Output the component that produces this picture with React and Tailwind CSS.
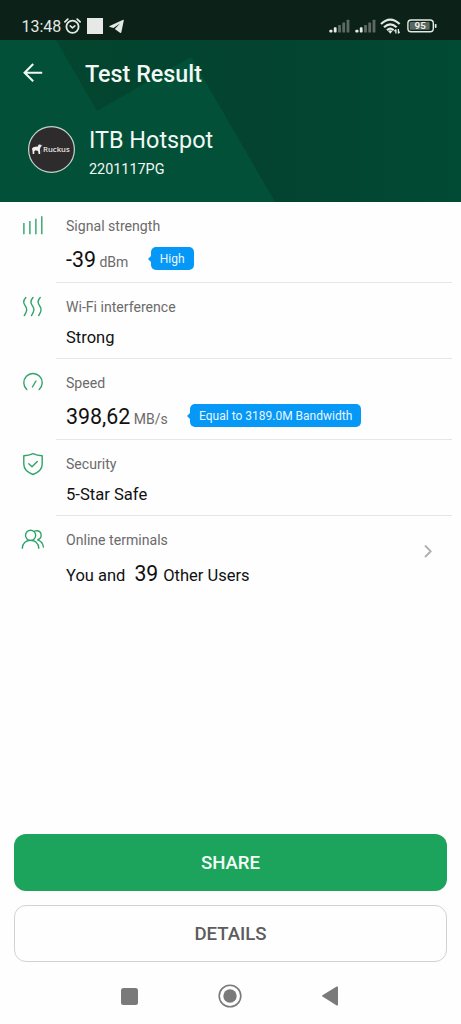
const stroke = { fill: "none", strokeLinecap: "round", strokeLinejoin: "round" };

function CellBars() {
  return (
    <svg className="h-[14px] w-[21px]" viewBox="0 0 21 14">
      <rect x="0.3" y="10.7" width="3.2" height="2.8" rx="1" fill="#e6ebe8" />
      <rect x="4.8" y="8.3" width="2.8" height="5.2" rx="0.8" fill="#e6ebe8" />
      <rect x="9.1" y="6" width="2.8" height="7.5" rx="0.5" fill="#5c6a62" />
      <rect x="13.3" y="3.4" width="2.8" height="10.1" rx="0.5" fill="#5c6a62" />
      <rect x="17.6" y="0.7" width="2.8" height="12.8" rx="0.5" fill="#5c6a62" />
    </svg>
  );
}

function StatusBar() {
  return (
    <div className="flex h-10 items-start bg-[#0c2117] pt-[17px] text-[#e3e9e5]">
      <span className="ml-[21.5px] w-[42.5px] whitespace-nowrap text-[16px] leading-[19px]">13:48</span>
      <svg className="mt-px h-[17px] w-[17px]" viewBox="0 0 17 17" {...stroke} stroke="currentColor" strokeWidth="1.8">
        <circle cx="8.5" cy="8.8" r="6.1" />
        <path d="M0.9 3.8 3.8 1.1M16.1 3.8 13.2 1.1" />
        <path d="M6.2 7.9 8.5 9.8 10.9 7.9" strokeWidth="1.6" />
      </svg>
      <span className="ml-[6px] mt-px h-4 w-4 bg-[#e6e9e7]" />
      <svg className="ml-[6px] mt-[2px] h-[15px] w-[15px]" viewBox="0 0 15 15" fill="currentColor">
        <path d="M14.2 0.8 0.6 7.1Q-.2 7.6.8 8.1L4.5 9.1 11 4.6 5.8 10 11 13.7Q12.1 14.3 12.4 13L14.8 1.4Q14.9.6 14.2.8Z" />
      </svg>
      <div className="ml-[205px] mt-[2px] flex items-start gap-[5px]">
        <CellBars />
        <CellBars />
      </div>
      <svg className="ml-[4px] h-[18px] w-[21px]" viewBox="0 0 21 18" {...stroke} strokeLinecap="butt" stroke="currentColor" strokeWidth="2.2">
        <path d="M1 7Q10.3-1.8 19.6 7M4 10.3Q10.3 4.4 16.6 10.3M7 13.2Q10.3 10.2 13.6 13.2" />
        <path d="M8 14Q10.3 12.7 12.5 14L10.3 16.7Z" fill="currentColor" stroke="none" />
        <path d="M15.9 16.6V12.8L14.4 14.3M18.4 12V16L19.7 14.7" strokeWidth="1.3" />
      </svg>
      <svg className="ml-[5px] mt-[1px] h-[16px] w-[32px]" viewBox="0 0 32 16">
        <rect x="1.9" y="2" width="25.4" height="11.8" rx="3.2" fill="none" stroke="#e3e9e5" strokeWidth="1.4" />
        <rect x="3.7" y="4" width="20" height="7.8" rx="1" fill="#5b6860" />
        <rect x="28.8" y="5.9" width="1.7" height="4" rx="0.7" fill="#e3e9e5" />
        <text x="14.2" y="11.4" textAnchor="middle" fontSize="9.8" fontWeight="600" fill="#eef2ef">95</text>
      </svg>
    </div>
  );
}

function Avatar() {
  return (
    <svg className="h-12 w-12" viewBox="0 0 48 48">
      <circle cx="24.5" cy="23.5" r="22.9" fill="#2e2b2c" stroke="#c5d5cc" strokeWidth="1.2" />
      <path d="M5 22.6Q6 20.9 8.4 20.7L11.1 20.5 11.3 18.8 13 18.4 15 19.6 13.7 21 12.9 23.2 13.2 28H11.6L11.1 24.9 8.5 24.3 7.2 25.4 7.3 28.1H5.7L5.5 25.2Z" fill="#f1f0ee" />
      <path d="M15 18.5V21M14.2 24V27" stroke="#75604f" strokeWidth="0.6" />
      <text x="16" y="26.2" fontFamily="Open Sans" fontSize="6.6" fontWeight="600" textLength="26.8" lengthAdjust="spacingAndGlyphs" fill="#e7e5e4">Ruckus</text>
    </svg>
  );
}

function Header() {
  return (
    <header className="relative h-[162px] overflow-hidden bg-[#025037] text-[#f1f8f4]">
      <svg className="absolute inset-0 h-full w-full" viewBox="0 0 461 162">
        <defs>
          <linearGradient id="shade" x1="0" y1="0" x2="1" y2="0">
            <stop offset="0" stopColor="#03452f" />
            <stop offset="0.5" stopColor="#034330" />
            <stop offset="1" stopColor="#014a33" />
          </linearGradient>
        </defs>
        <path d="M56 0 97 71 191 17 275 162H461V0Z" fill="url(#shade)" />
      </svg>
      <div className="relative flex h-12 items-center pt-[20px]">
        <svg className="mb-[2px] ml-[22px] h-[26px] w-[22px]" viewBox="0 0 22 26" {...stroke} stroke="currentColor" strokeWidth="2.1" strokeLinecap="butt" strokeLinejoin="miter">
          <path d="M20.2 12.7H3M11.2 4.1 2.6 12.7 11.2 21.3" />
        </svg>
        <h1 className="ml-[41px] text-[23.3px] font-medium leading-7">Test Result</h1>
      </div>
      <div className="relative ml-[27px] mt-[38px] flex">
        <Avatar />
        <div className="ml-[14px]">
          <p className="text-[23.4px] leading-7">ITB Hotspot</p>
          <p className="mt-[7px] text-[14.4px] leading-[18px]">2201117PG</p>
        </div>
      </div>
    </header>
  );
}

function Tip({ children }) {
  return (
    <span className="relative flex h-[23.5px] items-center rounded-[5px] bg-[#0598f6] px-[9px] text-[12px] text-[#eaf6ff]">
      <svg className="absolute -left-[3px] top-[8px] h-2 w-1" viewBox="0 0 4 8">
        <path d="M4 0 0 4 4 8Z" fill="#0598f6" />
      </svg>
      {children}
    </span>
  );
}

function Reading({ value, unit, tip }) {
  return (
    <div className="mt-[7.5px] flex h-8 items-center">
      <div className="flex items-baseline pt-[3px]">
        <span className="text-[21.4px]">{value}</span>
        <span className="ml-[3.5px] text-[14px] text-[#6b6b6b]">{unit}</span>
      </div>
      <div className="ml-[22.3px]"><Tip>{tip}</Tip></div>
    </div>
  );
}

function Row({ icon, label, height, last, children }) {
  return (
    <section className={`flex ${height}`}>
      <svg className="ml-[21px] mt-[12px] h-6 w-6 shrink-0" viewBox="0 0 24 24" {...stroke} stroke="#2fa468" strokeWidth="1.4">
        {icon}
      </svg>
      <div className={`relative ml-[11px] mr-[9px] flex-1 pl-[10px] pt-[15px] ${last ? "" : "border-b border-[#e6e6e6]"}`}>
        <h2 className="text-[14.1px] leading-[18px] text-[#6b6b6b]">{label}</h2>
        {children}
      </div>
    </section>
  );
}

export default function App() {
  return (
    <div className="flex h-[1024px] w-[461px] flex-col overflow-hidden bg-[#fefefe] font-['Roboto',sans-serif] text-[#111]">
      <StatusBar />
      <Header />
      <main className="flex-1">
        <Row height="h-[81px]" label="Signal strength" icon={<path d="M2.9 9V20.2M8.9 7V20.2M14.9 4.7V20.2M20.8 2.2V20.2" strokeLinecap="butt" />}>
          <Reading value="-39" unit="dBm" tip="High" />
        </Row>
        <Row height="h-[76px]" label="Wi-Fi interference" icon={<path d="M4.8 2.5C1.3 6.5 2.8 8.5 4.6 11.3S6.1 16 3.3 20.6M12 2.5C8.5 6.5 10 8.5 11.8 11.3S13.3 16 10.5 20.6M19.2 2.5C15.7 6.5 17.2 8.5 19 11.3S20.5 16 17.7 20.6" />}>
          <p className="mt-[12px] text-[16.5px] leading-5">Strong</p>
        </Row>
        <Row height="h-[81px]" label="Speed" icon={<path d="M5.8 18.5A9.2 9.2 0 1 1 18.2 18.5M11.4 16 15 10" />}>
          <Reading value="398,62" unit="MB/s" tip="Equal to 3189.0M Bandwidth" />
        </Row>
        <Row height="h-[76px]" label="Security" icon={<path d="M12 1.7Q16 3.5 21.2 3.8V12Q21.2 19 12 22.5 2.8 19 2.8 12V3.8Q8 3.5 12 1.7ZM7.8 11.7 11 14.8 16.3 9.6" />}>
          <p className="mt-[12px] text-[16.6px] leading-5">5-Star Safe</p>
        </Row>
        <Row height="h-[88px]" last label="Online terminals" icon={<path d="M4.5 7.3a5.1 5.1 0 1 0 10.2 0a5.1 5.1 0 1 0-10.2 0M1.3 20.2C1.5 9.5 17.5 9.5 17.8 20.2M14 2.9C21 1.5 22.2 10 16.6 11.8 20.3 13 22 15.3 22.4 19" />}>
          <p className="mt-[9px] flex h-8 items-center text-[16.5px]">
            <span className="mt-[4px]">You and</span>
            <span className="ml-[9px] text-[21.2px]">39</span>
            <span className="ml-[5px] mt-[4px]">Other Users</span>
          </p>
          <svg className="absolute right-[18px] top-[27px] h-4 w-[12px]" viewBox="0 0 12 16" {...stroke} stroke="#b0b0b0" strokeWidth="1.9" strokeLinecap="butt">
            <path d="M3 2.5 8.8 8.3 3 14" />
          </svg>
        </Row>
      </main>
      <footer className="flex h-[190px] flex-col px-[14px] text-[18.6px] font-medium">
        <button className="h-[57px] rounded-[12px] bg-[#1ca45c] pt-[2px] text-[#f3fbf6]">SHARE</button>
        <button className="mt-[14px] h-[57px] rounded-[12px] border border-[#d2d2d2] pt-[2px] text-[#5c5c5c]">DETAILS</button>
        <nav className="mt-[22px] flex h-6 items-center text-[#7a7a7a]">
          <span className="ml-[107px] h-[17px] w-[17px] rounded-[2.5px] bg-[#7a7a7a]" />
          <svg className="ml-[80px] h-6 w-6" viewBox="0 0 24 24">
            <circle cx="12" cy="12" r="10.8" fill="none" stroke="currentColor" strokeWidth="1.6" />
            <circle cx="12" cy="12" r="6.7" fill="currentColor" />
          </svg>
          <svg className="ml-[80px] h-5 w-4" viewBox="0 0 16 20" fill="currentColor">
            <path d="M.5 9.3Q-.1 10 .5 10.6L14.7 19.4Q15.9 20 16 18.8V1.2Q15.9 0 14.7.6Z" />
          </svg>
        </nav>
      </footer>
    </div>
  );
}
